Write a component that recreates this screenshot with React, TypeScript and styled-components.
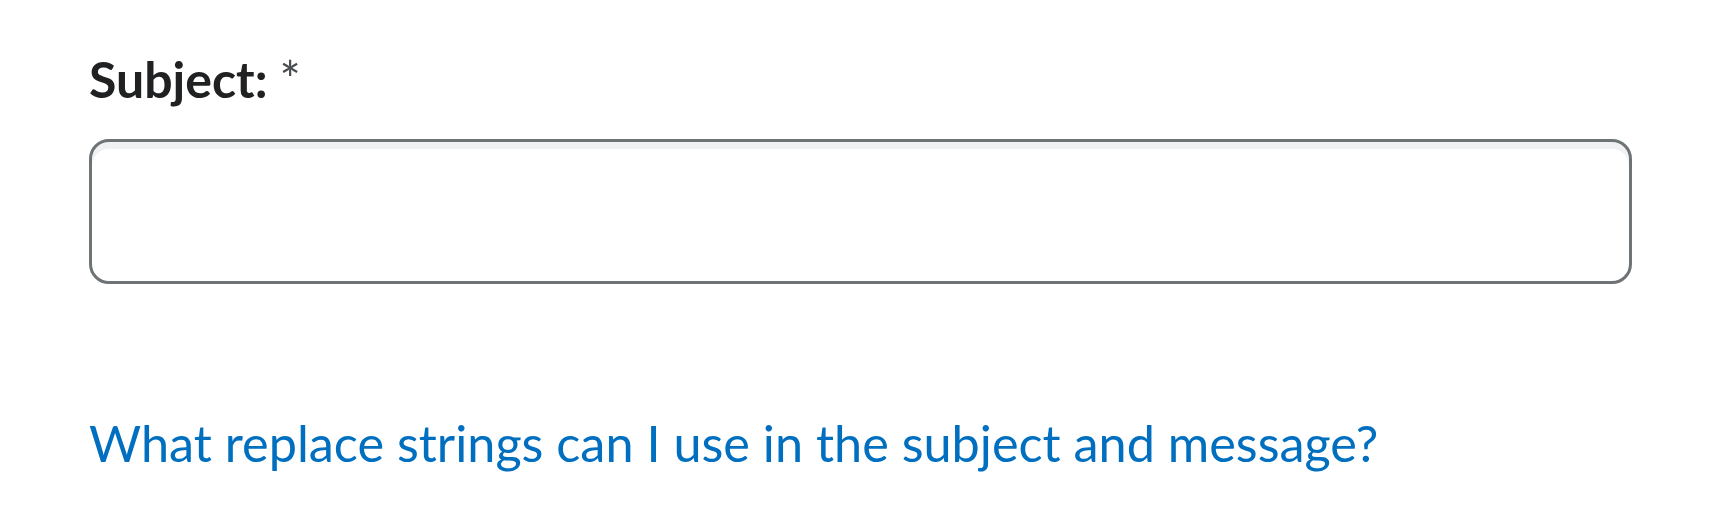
import React from "react";
import styled, { createGlobalStyle } from "styled-components";

const GlobalStyle = createGlobalStyle`
  html, body {
    margin: 0;
    padding: 0;
    background: #ffffff;
  }
  body {
    font-family: Lato, "Noto Sans", sans-serif;
  }
`;

const Page = styled.div`
  display: flex;
  flex-direction: column;
  padding: 48.6px 86px 0 89px;
`;

const Field = styled.div`
  display: flex;
  flex-direction: column;
  gap: 30.4px;
`;

const Label = styled.label`
  font-family: Lato, sans-serif;
  font-size: 50px;
  line-height: 60px;
  font-weight: 700;
  color: #202122;
`;

const Required = styled.span`
  font-weight: 400;
  color: #494c4e;
  margin-left: 12px;
`;

const TextInput = styled.input`
  box-sizing: border-box;
  width: 100%;
  height: 145px;
  margin: 0;
  border: 3px solid #6e7376;
  border-radius: 20px;
  background: #ffffff;
  box-shadow: inset 0 7px 0 0 rgba(177, 185, 190, 0.2);
  font-family: Lato, sans-serif;
  font-size: 44px;
  padding: 0 30px;
  outline: none;
`;

const HelpLink = styled.a`
  margin-top: 129.4px;
  font-family: Lato, sans-serif;
  font-size: 50.4px;
  line-height: 60px;
  font-weight: 400;
  color: #006fbf;
  text-decoration: none;
  align-self: flex-start;
  cursor: pointer;
`;

export default function App() {
  return (
    <>
      <GlobalStyle />
      <Page>
        <Field>
          <Label htmlFor="subject">
            Subject:<Required>*</Required>
          </Label>
          <TextInput id="subject" type="text" />
        </Field>
        <HelpLink href="#">What replace strings can I use in the subject and message?</HelpLink>
      </Page>
    </>
  );
}
